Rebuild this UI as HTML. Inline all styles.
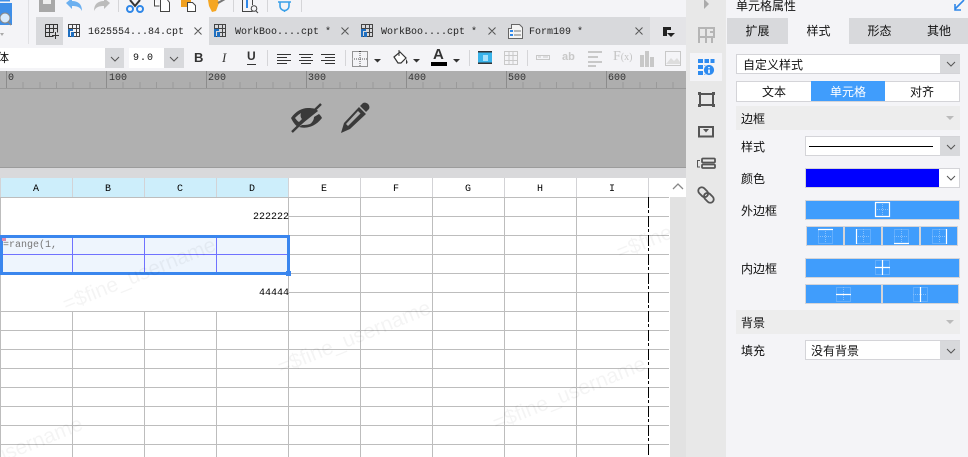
<!DOCTYPE html>
<html><head><meta charset="utf-8">
<style>
html{margin:0;padding:0;width:968px;height:457px;overflow:hidden}
body{margin:0;padding:0;width:968px;height:457px;overflow:hidden;position:relative;background:#f4f4f7;font-family:"Liberation Sans","WenQuanYi Zen Hei","Noto Sans CJK SC",sans-serif;}
.a{position:absolute}
.m{position:absolute;font-family:"Liberation Mono","WenQuanYi Zen Hei",monospace;font-size:10px;line-height:12px;color:#222;white-space:pre}
.c{position:absolute;font-size:12px;line-height:16px;color:#111;white-space:pre;font-family:"WenQuanYi Zen Hei","Noto Sans CJK SC",sans-serif}
.sep{position:absolute;width:1px;background:#d5d5d8}
.wm{position:absolute;font:21px "Liberation Sans",sans-serif;color:rgba(0,0,0,.045);transform:rotate(-22deg);white-space:pre;transform-origin:center}
.blue{background:#409dfc;box-sizing:border-box;border:1px solid #d4d4d8}
.tab{position:absolute;top:18px;height:24px;padding-bottom:2px;display:flex;align-items:center;justify-content:center;font-size:12px;color:#111;font-family:"WenQuanYi Zen Hei","Noto Sans CJK SC",sans-serif}
.sec{position:absolute;left:736px;width:224px;background:#ededed}
.box{position:absolute;background:#fff;border:1px solid #d4d4d8;box-sizing:border-box}
.arr{position:absolute;background:#d8d9dc}
svg{position:absolute;overflow:hidden}
</style></head><body>

<!-- top toolbar -->
<svg class="a" style="left:0;top:0" width="320" height="18" viewBox="0 0 320 18">
<path d="M39 0h16v12H39z" fill="#a8a8a8"/><path d="M43 0h8v4h-8z" fill="#eee"/>
<path d="M66 3l6-5v3c6 0 10 3 10 10-2-4-5-5-10-5v3z" fill="#6cb0f0"/>
<path d="M110 3l-6-5v3c-6 0-10 3-10 10 2-4 5-5 10-5v3z" fill="#bcbcbc"/>
<path d="M130 0l5 6 5-6" fill="none" stroke="#333" stroke-width="2"/>
<circle cx="130" cy="9" r="3" fill="none" stroke="#2f87e8" stroke-width="2"/><circle cx="140" cy="9" r="3" fill="none" stroke="#2f87e8" stroke-width="2"/>
<path d="M154.500 0v6h5M160.500 0v11.500h9v-9l-2-2.500" fill="#fff" stroke="#444"/>
<path d="M181 0h10v7h-10z" fill="#f0a020"/><path d="M187.500 2.500h5l3 3v6h-8z" fill="#fff" stroke="#444"/>
<path d="M208 0h10l1 3-3 8-4 1-3-6z" fill="#f5a623"/><path d="M218 3l7-4" stroke="#777" stroke-width="2"/>
<path d="M242.500 0v11.500h10M252.500 0v5" fill="none" stroke="#444"/><path d="M247 0v8" stroke="#2f87e8" stroke-width="2"/><circle cx="254" cy="8.500" r="2.800" fill="none" stroke="#444"/><path d="M256 11l2 2" stroke="#444"/>
<path d="M278 2h13M280 2v4a4.500 4.500 0 0 0 9 0V2M284.500 10v2" fill="none" stroke="#3aa0e8" stroke-width="1.600"/>
</svg>
<div class="sep" style="left:28px;top:0;height:44px;background:#e0e0e3"></div>
<div class="sep" style="left:118px;top:0;height:12px"></div>
<div class="sep" style="left:233px;top:0;height:12px"></div>
<div class="sep" style="left:267px;top:0;height:12px"></div>
<div class="sep" style="left:301px;top:0;height:12px"></div>
<svg class="a" style="left:0;top:0" width="14" height="40" viewBox="0 0 14 40"><path d="M0 3h12v22H0z" fill="#3f8fe8"/><path d="M0 0h10v1.500H0z" fill="#3f8fe8"/><circle cx="5" cy="18" r="5" fill="#d6e9fb" stroke="#888"/><path d="M8 22l3 3" stroke="#888" stroke-width="1.500"/><path d="M0 33h4l-2 3z" fill="#aaa"/></svg>

<!-- tab bar -->
<div class="a" style="left:36px;top:17px;width:614px;height:28px;background:#d8d9dc"></div>
<div class="a" style="left:650px;top:17px;width:36px;height:28px;background:#e4e4e7"></div>
<div class="a" style="left:63px;top:17px;width:146px;height:28px;background:#f4f4f7"></div>
<svg class="a" style="left:0;top:17px" width="686" height="28" viewBox="0 0 686 28">
<g fill="none" stroke="#333"><path d="M45.500 7.500h12v8M45.500 7.500v12h8M45.500 11.500h12M45.500 15.500h8M49.500 7.500v12M53.500 7.500v8"/><path d="M55.500 15v7M52 18.500h7"/></g>
<g id="t"><path d="M68.500 7.500h11v12h-11z" fill="none" stroke="#444"/><path d="M68.500 11.500h11M72.500 7.500v4M76.500 7.500v12M72.500 15.500h7" fill="none" stroke="#444"/><path d="M68 12h5v2h-3v6h-2zM71 15h3v5h-3z" fill="#1f6fc0"/></g>
<use href="#t" x="146"/><use href="#t" x="293"/>
<path d="M508.500 11.500h3v-4h8l3 3v11h-14z" fill="#f4f4f4" stroke="#666"/><path d="M510 13h3v2h-3zM510 17h3v2h-3z" fill="#2f87e8"/><path d="M514 14h7M514 18h7" stroke="#777"/>
<path d="M663 10h8v3h-4v6h-4z" fill="#222"/><path d="M667 16h8l-4 4z" fill="#222"/>
<g fill="none" stroke="#555"><path d="M194.500 10.500l7 7M201.500 10.500l-7 7M341.500 10.500l7 7M348.500 10.500l-7 7M488.500 10.500l7 7M495.500 10.500l-7 7M635.500 10.500l7 7M642.500 10.500l-7 7"/></g>
</svg>
<div class="m" style="left:88px;top:27px">1625554...84.cpt</div>
<div class="m" style="left:235px;top:27px">WorkBoo....cpt *</div>
<div class="m" style="left:381px;top:27px">WorkBoo....cpt *</div>
<div class="m" style="left:529px;top:27px">Form109 *</div>

<!-- format bar -->
<div class="a" style="left:0;top:48px;width:105px;height:20px;background:#fff"></div>
<div class="arr" style="left:105px;top:48px;width:19px;height:20px"></div>
<div class="c" style="left:-3px;top:50px">体</div>
<div class="a" style="left:129px;top:48px;width:35px;height:20px;background:#fff"></div>
<div class="arr" style="left:164px;top:48px;width:20px;height:20px"></div>
<div class="m" style="left:133px;top:53px;color:#111;letter-spacing:1px">9.0</div>
<svg class="a" style="left:0;top:45px" width="690" height="26" viewBox="0 0 690 26">
<path d="M111 12l4 4 4-4M170 12l4 4 4-4" fill="none" stroke="#555"/>
<g fill="none" stroke="#333"><path d="M277 9.500h14M277 12.500h10M277 15.500h14M277 18.500h10M299 9.500h14M301 12.500h10M299 15.500h14M301 18.500h10M321 9.500h14M325 12.500h10M321 15.500h14M325 18.500h10"/></g>
<path d="M352.500 6.500h15v15h-15z" fill="none" stroke="#333" stroke-dasharray="1 1"/><path d="M352 14h16M360 6v16" stroke="#555" stroke-dasharray="1 1"/>
<path d="M374 14h7l-3.500 3.500zM413 14h7l-3.500 3.500zM453 14h7l-3.500 3.500z" fill="#333"/>
<path d="M394 12l6-5 6 6-5 5h-3z" fill="#fff" stroke="#333" stroke-width="1.200"/><path d="M399 5v6" stroke="#333"/><path d="M406 14c2 3 2 4 0 5z" fill="#333"/>
<path d="M431 17h16v4h-16z" fill="#000"/>
<path d="M478 6h14v13h-14z" fill="#39b3ea"/><path d="M478 6h14v1.500h-14zM478 17.500h14v1.500h-14z" fill="#333"/><path d="M483 10h5v6h-5z" fill="#a9e1fa"/>
<g stroke="#c9c9c9" fill="none"><path d="M504.500 6.500h13v13h-13zM504.500 10.500h13M504.500 15.500h13M509 6.500v13M513 6.500v13"/></g>
<path d="M536.500 10.500h13v4h-13z" fill="none" stroke="#c8c8c8"/><path d="M538 12h3M543 12h5" stroke="#c8c8c8"/>
<path d="M588 7h14M588 12h10M588 17h14M588 21h8" stroke="#c8c8c8" stroke-width="2"/>
<path d="M640 10h4v12h-4zM645 6h4v16h-4zM650 12h4v10h-4z" fill="#c8c8c8"/>
<path d="M665.500 6.500h15v14h-15z" fill="none" stroke="#c8c8c8"/><path d="M666 19l5-6 3 3 3-3 3 4v2z" fill="#ddd"/>
</svg>
<div class="a" style="left:194px;top:50px;font:bold 13px 'Liberation Sans',sans-serif;color:#333;line-height:15px">B</div>
<div class="a" style="left:222px;top:50px;font:italic 13px 'Liberation Serif',serif;color:#333;line-height:15px">I</div>
<div class="a" style="left:247px;top:49px;font:bold 12px 'Liberation Sans',sans-serif;color:#333;line-height:15px;border-bottom:1px solid #333">U</div>
<div class="a" style="left:433px;top:46px;font:bold 15px 'Liberation Sans',sans-serif;color:#333;line-height:17px">A</div>
<div class="a" style="left:562px;top:50px;font:bold 11px 'Liberation Sans',sans-serif;color:#c8c8c8;line-height:15px">ab</div>
<div class="a" style="left:613px;top:49px;font:14px 'Liberation Serif',serif;color:#c4c4c4;line-height:16px">F<span style="font-size:10px">(x)</span></div>
<div class="sep" style="left:267px;top:50px;height:16px"></div>
<div class="sep" style="left:345px;top:50px;height:16px"></div>
<div class="sep" style="left:469px;top:50px;height:16px"></div>
<div class="sep" style="left:527px;top:50px;height:16px"></div>

<!-- ruler -->
<div class="a" style="left:0;top:71px;width:686px;height:17px;background-color:#aeaeae;background-image:repeating-linear-gradient(90deg,#9a9a9a 0 1px,transparent 1px 16.667px);background-size:100% 6px;background-position:6px 11px;background-repeat:no-repeat"></div>
<div class="a" style="left:6px;top:71px;width:680px;height:17px;background-image:repeating-linear-gradient(90deg,#8c8c8c 0 1px,transparent 1px 100px)"></div>
<div class="a" style="left:0;top:88px;width:686px;height:1px;background:#999"></div>
<div class="m" style="left:8px;top:73px;color:#333">0</div>
<div class="m" style="left:109px;top:73px;color:#333">100</div>
<div class="m" style="left:208px;top:73px;color:#333">200</div>
<div class="m" style="left:308px;top:73px;color:#333">300</div>
<div class="m" style="left:408px;top:73px;color:#333">400</div>
<div class="m" style="left:508px;top:73px;color:#333">500</div>
<div class="m" style="left:608px;top:73px;color:#333">600</div>

<!-- gray panel -->
<div class="a" style="left:0;top:89px;width:686px;height:78px;background:#b0b0b0;border-bottom:1px solid #9c9c9c"></div>
<svg class="a" style="left:288px;top:100px" width="90" height="36" viewBox="0 0 90 36">
<path d="M3 18c5-7 11-10 17-10s8 1 10 3L10 27c-3-2-5-5-7-9z" fill="#3a3a3a"/>
<path d="M26 17c0 2-1 5-4 7-3 1-6 1-8 1l-3 2c7 2 16 0 23-9-1-2-2-3-3-4z" fill="#3a3a3a"/>
<path d="M4 32L33 4" stroke="#3a3a3a" stroke-width="2.400"/>
<path d="M7 18c2-2 3-3 6-5-1 3 0 5 1 6l-3 3c-2-1-3-3-4-4z" fill="#b0b0b0"/>
<path d="M53 33l3-10 15-16 7 7-16 15z" fill="#3a3a3a"/>
<path d="M72 6l3-3c2-1 4 0 5 1s2 3 1 5l-3 3z" fill="#3a3a3a"/>
<path d="M58 24l12-13 2.500 2.500L60 26z" fill="#b0b0b0"/>
<path d="M70.500 5.500l8 8" stroke="#b0b0b0" stroke-width="1.200"/>
</svg>

<!-- strip -->
<div class="a" style="left:0;top:168px;width:686px;height:10px;background:#d9d9db"></div>

<!-- sheet -->
<div class="a" style="left:0;top:178px;width:670px;height:279px;background:#fff;overflow:hidden">
 <div class="a" style="left:0;top:19px;width:669px;height:260px;background-image:repeating-linear-gradient(180deg,#bdbdbd 0 1px,transparent 1px 19px)"></div>
 <div class="a" style="left:0;top:19px;width:669px;height:260px;background-image:linear-gradient(90deg,#bdbdbd 1px,transparent 1px);background-size:72px 100%"></div>
 <!-- merged rows -->
 <div class="a" style="left:1px;top:20px;width:287px;height:37px;background:#fff"></div>
 <div class="a" style="left:1px;top:97px;width:287px;height:36px;background:#fff"></div>
 <!-- header -->
 <div class="a" style="left:0;top:0;width:288px;height:19px;background:#cdeefb"></div>
 <div class="a" style="left:0;top:0;width:669px;height:19px;background-image:linear-gradient(90deg,#d3d3d6 1px,transparent 1px);background-size:72px 100%"></div>
 <div class="m" style="left:33px;top:6px;color:#000">A</div>
 <div class="m" style="left:105px;top:6px;color:#000">B</div>
 <div class="m" style="left:177px;top:6px;color:#000">C</div>
 <div class="m" style="left:249px;top:6px;color:#000">D</div>
 <div class="m" style="left:321px;top:6px;color:#000">E</div>
 <div class="m" style="left:393px;top:6px;color:#000">F</div>
 <div class="m" style="left:465px;top:6px;color:#000">G</div>
 <div class="m" style="left:537px;top:6px;color:#000">H</div>
 <div class="m" style="left:609px;top:6px;color:#000">I</div>
 <!-- selection -->
 <div class="a" style="left:0;top:57px;width:289px;height:39px;background:#eef5fd"></div>
 <div class="a" style="left:0;top:76px;width:289px;height:1px;background:#6f72ff"></div>
 <div class="a" style="left:72px;top:57px;width:1px;height:39px;background:#6f72ff"></div>
 <div class="a" style="left:144px;top:57px;width:1px;height:39px;background:#6f72ff"></div>
 <div class="a" style="left:216px;top:57px;width:1px;height:39px;background:#6f72ff"></div>
 <div class="a" style="left:0;top:57px;width:290px;height:40px;box-sizing:border-box;border:3px solid #3a86ee"></div>
 <div class="a" style="left:286px;top:93px;width:5px;height:5px;background:#3a86ee"></div>
 <div class="m" style="left:3px;top:62px;color:#777">=range(1,</div>
 <div class="a" style="left:2px;top:60px;width:4px;height:3px;background:#e08ab0"></div>
 <div class="m" style="left:253px;top:34px;color:#000">222222</div>
 <div class="m" style="left:259px;top:110px;color:#000">44444</div>
 <!-- dashed line -->
 <div class="a" style="left:648px;top:19px;width:1px;height:260px;background-image:repeating-linear-gradient(180deg,#000 0 11px,#fff 11px 13px,#000 13px 16px,#fff 16px 19px)"></div>
 <!-- watermarks -->
 <div class="wm" style="left:58px;top:85px">=$fine_username</div>
 <div class="wm" style="left:273px;top:148px">=$fine_username</div>
 <div class="wm" style="left:488px;top:204px">=$fine_username</div>
 <div class="wm" style="left:612px;top:33px">=$fine_username</div>
 <div class="wm" style="left:-75px;top:264px">=$fine_username</div>
</div>

<!-- scrollbar -->
<div class="a" style="left:670px;top:178px;width:16px;height:279px;background:#e2e2e2"></div>
<div class="a" style="left:670px;top:178px;width:16px;height:19px;background:#fff"></div>
<svg class="a" style="left:670px;top:178px" width="16" height="19"><path d="M3 11l5-5 5 5" fill="none" stroke="#888" stroke-width="1.300"/></svg>

<!-- sidebar -->
<div class="a" style="left:686px;top:0;width:40px;height:457px;background:#e8e8e8"></div>
<div class="a" style="left:690px;top:53px;width:32px;height:28px;background:#f4f4f7"></div>
<svg class="a" style="left:686px;top:0" width="40" height="215" viewBox="0 0 40 215">
<path d="M18 -1v10l5-5z" fill="#aaa"/>
<g fill="none" stroke="#b5b5b5" stroke-width="2"><path d="M13 28h15v9H13zM20 28v15M13 37v6M26 37v6M24 32h4"/></g>
<path d="M12 59h5v4h-5zM18.500 59h4.500v4h-4.500zM24.500 59h4v4h-4zM12 65h5v4h-5zM12 71h5v4h-5zM18.500 65h3v4h-3zM18.500 71h1v4h-1z" fill="#2e8bf0"/>
<circle cx="23" cy="70" r="5.500" fill="#2e8bf0" stroke="#f4f4f7" stroke-width=".8"/><path d="M23 67v1.200M23 69.500v3.800" stroke="#fff" stroke-width="1.600"/>
<path d="M14 94h13v11H14z" fill="none" stroke="#555" stroke-width="2"/>
<path d="M12 92h3v3h-3zM26 92h3v3h-3zM12 104h3v3h-3zM26 104h3v3h-3z" fill="#555"/>
<path d="M13 127h14v9.500H13z" fill="none" stroke="#555" stroke-width="2"/>
<path d="M17 129h6l-3 3.500z" fill="#555"/>
<rect x="16" y="158.500" width="13" height="4" rx="1" fill="none" stroke="#555" stroke-width="1.800"/>
<rect x="16" y="164.500" width="13" height="3.500" rx="1" fill="none" stroke="#555" stroke-width="1.800"/>
<path d="M14 160.500h-2.500v6.500H14" fill="none" stroke="#555"/>
<g fill="none" stroke="#555" stroke-width="1.800" transform="rotate(45 20 195)"><rect x="10.500" y="191.500" width="11" height="7" rx="3.500"/><rect x="18.500" y="191.500" width="11" height="7" rx="3.500"/></g>
</svg>

<!-- right panel -->
<div class="a" style="left:726px;top:0;width:242px;height:457px;background:#f4f4f7"></div>
<div class="c" style="left:736px;top:-2px">单元格属性</div>
<svg class="a" style="left:954px;top:0" width="14" height="12"><path d="M1 9L10 0M1 4v6h6" fill="none" stroke="#2f87e8" stroke-width="1.600"/></svg>
<div class="a" style="left:727px;top:18px;width:241px;height:26px;background:#d8d9dc"></div>
<div class="tab" style="left:727px;width:61px">扩展</div>
<div class="tab" style="left:788px;width:61px;background:#f4f4f7">样式</div>
<div class="tab" style="left:849px;width:61px">形态</div>
<div class="tab" style="left:910px;width:58px">其他</div>

<div class="box" style="left:736px;top:54px;width:224px;height:20px"></div>
<div class="arr" style="left:940px;top:55px;width:20px;height:18px"></div>
<div class="c" style="left:743px;top:57px">自定义样式</div>

<div class="box" style="left:736px;top:81px;width:224px;height:21px"></div>
<div class="a" style="left:811px;top:81px;width:74px;height:20px;background:#409dfc"></div>
<div class="c" style="left:762px;top:84px">文本</div>
<div class="c" style="left:830px;top:84px;color:#fff">单元格</div>
<div class="c" style="left:910px;top:84px">对齐</div>

<div class="sec" style="top:106px;height:24px"></div>
<div class="c" style="left:741px;top:111px">边框</div>
<div class="c" style="left:741px;top:139px">样式</div>
<div class="box" style="left:805px;top:136px;width:155px;height:20px"></div>
<div class="arr" style="left:940px;top:137px;width:20px;height:19px"></div>
<div class="a" style="left:809px;top:146px;width:124px;height:1px;background:#000"></div>

<div class="c" style="left:741px;top:171px">颜色</div>
<div class="box" style="left:805px;top:168px;width:155px;height:20px;background:#fff"></div>
<div class="a" style="left:806px;top:169px;width:133px;height:18px;background:#0000ff"></div>

<div class="c" style="left:741px;top:203px">外边框</div>
<div class="a blue" style="left:805px;top:200px;width:155px;height:20px"></div>
<div class="c" style="left:741px;top:261px">内边框</div>
<div class="a blue" style="left:805px;top:258px;width:155px;height:20px"></div>

<div class="a blue" style="left:806px;top:226px;width:38px;height:20px"></div>
<div class="a blue" style="left:844px;top:226px;width:38px;height:20px"></div>
<div class="a blue" style="left:882px;top:226px;width:38px;height:20px"></div>
<div class="a blue" style="left:920px;top:226px;width:38px;height:20px"></div>
<div class="a blue" style="left:805px;top:284px;width:77px;height:20px"></div>
<div class="a blue" style="left:882px;top:284px;width:77px;height:20px"></div>

<div class="sec" style="top:310px;height:24px"></div>
<div class="c" style="left:741px;top:315px">背景</div>
<div class="c" style="left:741px;top:343px">填充</div>
<div class="box" style="left:805px;top:340px;width:155px;height:20px"></div>
<div class="arr" style="left:940px;top:341px;width:20px;height:19px"></div>
<div class="c" style="left:811px;top:343px">没有背景</div>

<svg class="a" style="left:726px;top:0" width="242" height="370" viewBox="726 0 242 370">
<g fill="none" stroke="#555" stroke-width="1"><path d="M947 62l4 4 4-4M947 145l4 4 4-4M947 176l4 4 4-4M947 349l4 4 4-4"/></g>
<path d="M946 116h8l-4 4zM946 320h8l-4 4z" fill="#bbb"/>
<g fill="none" stroke="#86c0fb" stroke-dasharray="1 1">
<path d="M875.500 202.500h14v14h-14zM882.500 202v14M875 209.500h14"/>
<path d="M818.500 229.500h14v14h-14zM825.500 229v14M818 236.500h14"/>
<path d="M856.500 229.500h14v14h-14zM863.500 229v14M856 236.500h14"/>
<path d="M894.500 229.500h14v14h-14zM901.500 229v14M894 236.500h14"/>
<path d="M932.500 229.500h14v14h-14zM939.500 229v14M932 236.500h14"/>
<path d="M875.500 260.500h14v14h-14z"/>
<path d="M836.500 287.500h14v14h-14zM843.500 287v14"/>
<path d="M913.500 287.500h14v14h-14zM913 294.500h14"/>
</g>
<g fill="none" stroke="#fff" stroke-width="1.200">
<path d="M875.500 202.500h14v14h-14z"/>
<path d="M818 229.500h15M856.500 229v15M894 243.500h15M946.500 229v15"/>
<path d="M875 267.500h15M882.500 260v15"/>
<path d="M836 294.500h15M920.500 287v15"/>
</g>
</svg>
</body></html>
